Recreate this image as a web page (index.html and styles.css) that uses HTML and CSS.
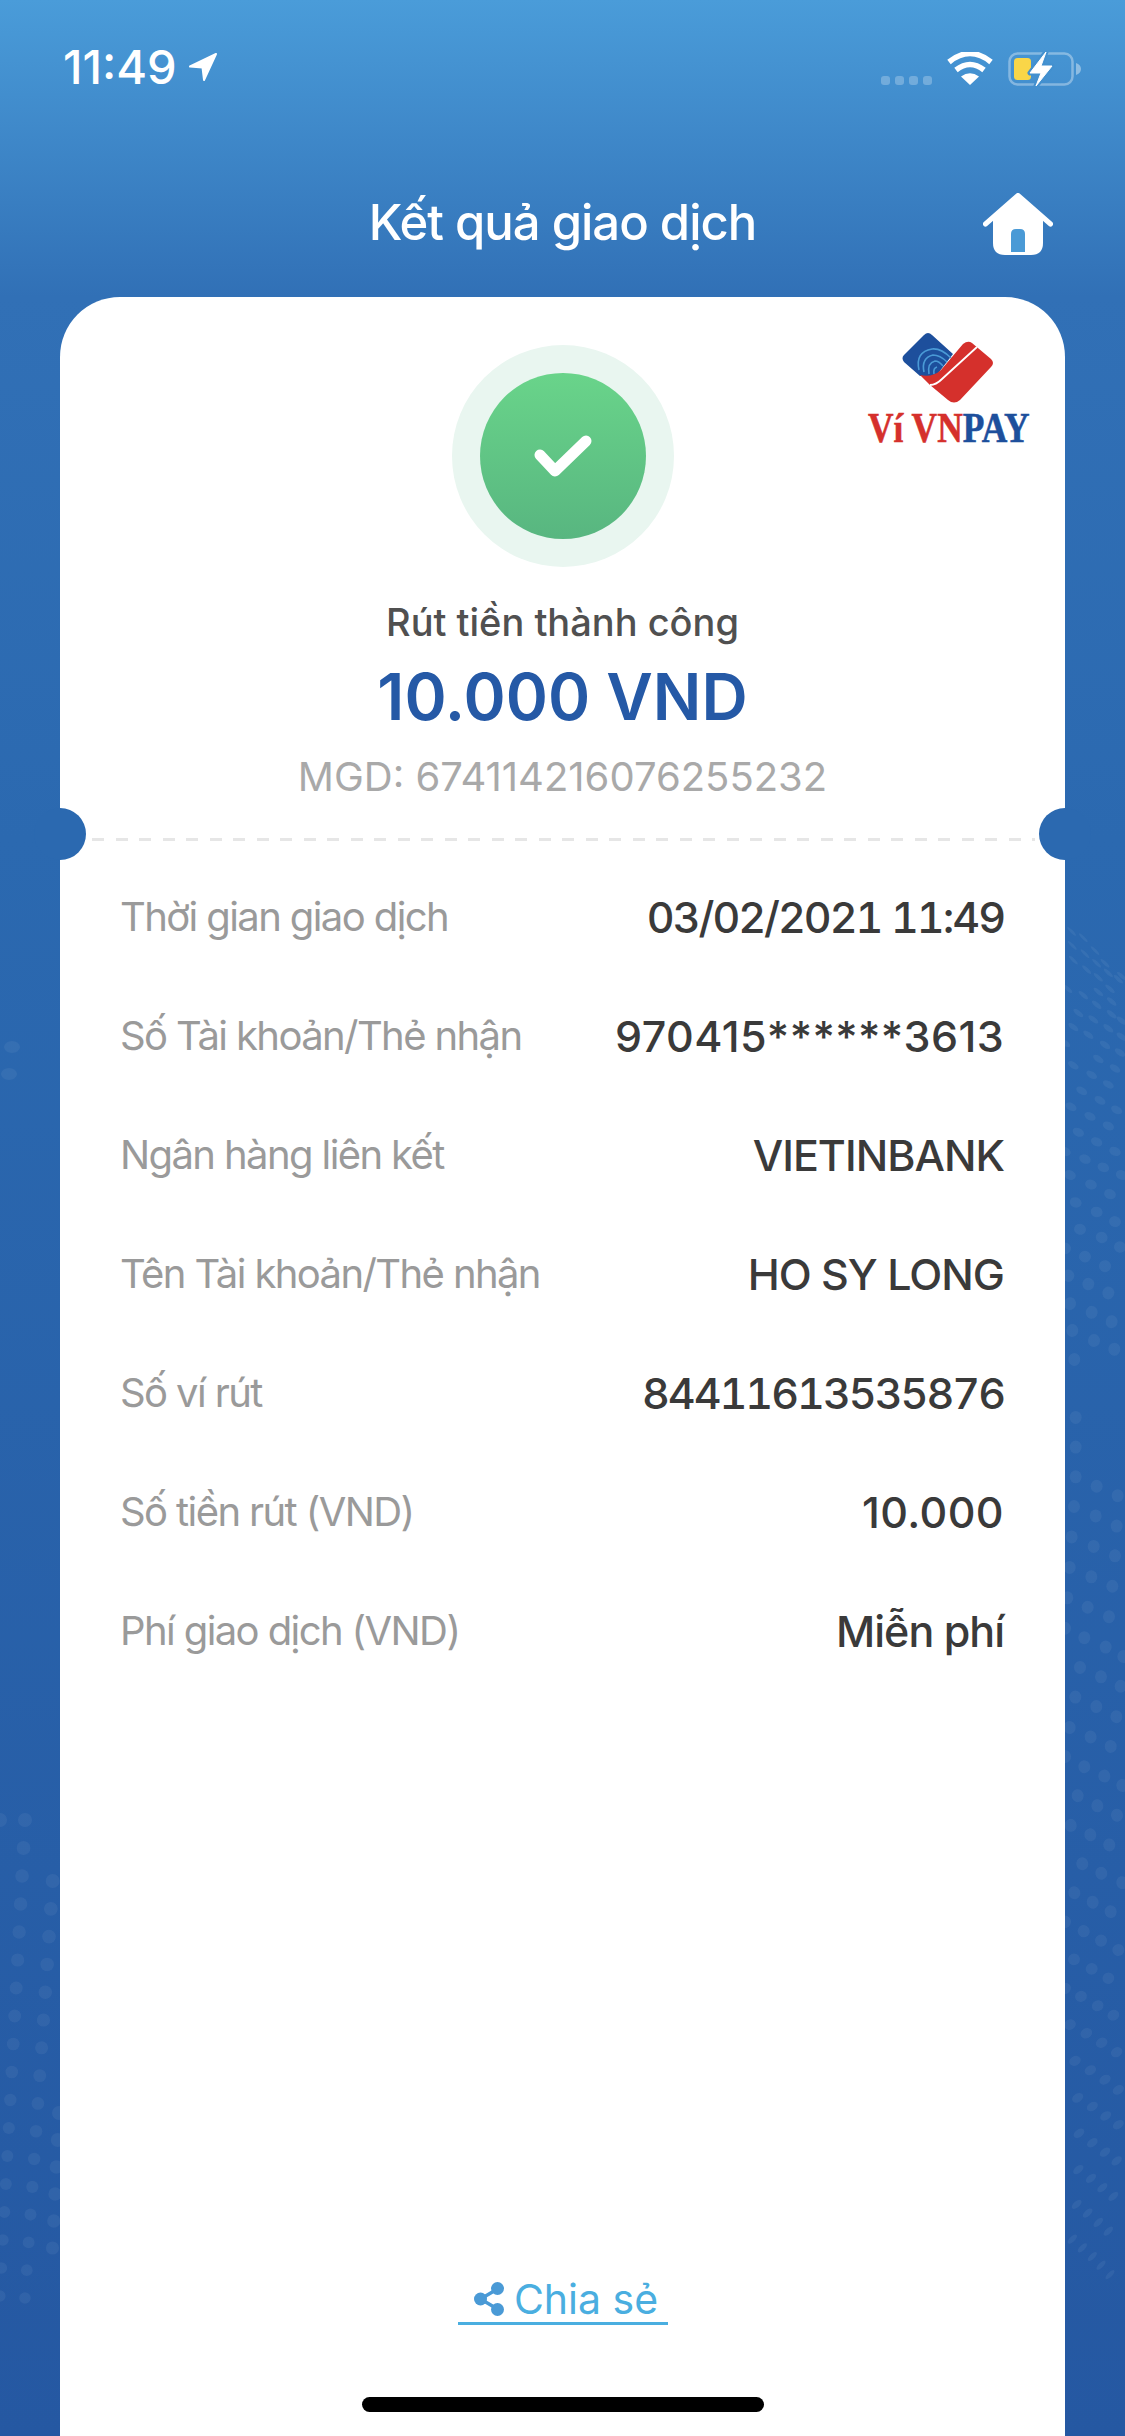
FILE: index.html
```html
<!DOCTYPE html>
<html lang="vi">
<head>
    <meta charset="UTF-8">
    <meta name="viewport" content="width=device-width, initial-scale=1.0">
    <title>Kết quả giao dịch</title>
    <link rel="stylesheet" href="styles.css">
</head>
<body>
    <div class="screen">
        <svg class="dots" width="1125" height="2436" viewBox="0 0 1125 2436">
            <g fill="#fff" fill-opacity="0.055" id="dotGroup"></g>
        </svg>

        <div class="status-bar">
            <div class="status-left">
                <span class="clock">11:49</span>
                <svg class="loc-icon" width="30" height="30" viewBox="0 0 30 30"><path d="M28 2 2 14.500l12.500 1L16 28z" fill="#fff" stroke="#fff" stroke-width="2" stroke-linejoin="round"/></svg>
            </div>
            <div class="status-right">
                <div class="signal"><i></i><i></i><i></i><i></i></div>
                <svg class="wifi-icon" width="46" height="33" viewBox="0 0 46 33">
                    <path d="M23 33 14 24.500q9-6.500 18 0z" fill="#fff"/>
                    <path d="M9 18q14-11 28 0" fill="none" stroke="#fff" stroke-width="5.500"/>
                    <path d="M2 10q21-17 42 0" fill="none" stroke="#fff" stroke-width="5.500"/>
                </svg>
                <svg class="battery-icon" width="74" height="35" viewBox="0 0 74 35">
                    <rect x="1.500" y="1.500" width="63" height="31" rx="8" fill="none" stroke="#fff" stroke-opacity="0.35" stroke-width="2.500"/>
                    <path d="M68 11c3 1 5 3 5 6s-2 5-5 6z" fill="#fff" fill-opacity="0.4"/>
                    <rect x="6" y="6" width="17" height="22" rx="3.500" fill="#f9d648"/>
                    <path d="M38 0 22 21H33L28 34 44 14H33z" fill="#4290cf" stroke="#4290cf" stroke-width="5" stroke-linejoin="round"/>
                    <path d="M38 0 22 21H33L28 34 44 14H33z" fill="#fff" stroke="#fff" stroke-width="1" stroke-linejoin="round"/>
                </svg>
            </div>
        </div>

        <header class="top-bar">
            <h1>Kết quả giao dịch</h1>
            <svg class="home-icon" width="70" height="62" viewBox="0 0 70 62">
                <path d="M2.500 31 35 2.500 67.500 31" fill="none" stroke="#fff" stroke-width="5" stroke-linecap="round" stroke-linejoin="round"/>
                <path d="M35 3 60 25v25q0 12-12 12H22Q10 62 10 50V25z" fill="#fff"/>
                <path d="M28 59V41q0-5 5-5h4q5 0 5 5v18z" fill="#4a9ad6"/>
            </svg>
        </header>

        <main class="card">
            <span class="notch notch-left"></span>
            <span class="notch notch-right"></span>

            <svg class="logo" width="172" height="128" viewBox="0 0 172 128">
                <path d="M58 5q4-4 8 0L87 24 70 46H54L38 32q-3-4 0-7z" fill="#1d4f9c"/>
                <g fill="none" stroke="#4a9ad6" stroke-width="1.600">
                    <path d="M53 40Q49 22 66 19 75 18 85 28"/>
                    <path d="M58 42Q55 28 67 25 74 25 81 32"/>
                    <path d="M63 44Q61 33 69 31 73 31 77 36"/>
                    <path d="M68 44Q67 38 71 37"/>
                </g>
                <path d="M54 45Q66 48 75 40L97 14q5-4 9-1L125 29q4 4 0 8L94 70q-6 5-12 0L64 55z" fill="#d5302c"/>
                <path d="M64 55Q70 55 76 49L111 17" fill="none" stroke="#fff" stroke-width="1.800"/>
                <g transform="translate(2 112) scale(1 1.17)">
                    <text class="logo-text"><tspan class="logo-red">Ví VN</tspan><tspan class="logo-blue">PAY</tspan></text>
                </g>
            </svg>

            <section class="result">
                <div class="check-ring">
                    <div class="check-circle">
                        <svg width="58" height="42" viewBox="0 0 58 42"><path d="M6 20 21 36 52 6" fill="none" stroke="#fff" stroke-width="11" stroke-linecap="round" stroke-linejoin="round"/></svg>
                    </div>
                </div>
                <p class="result-title">Rút tiền thành công</p>
                <p class="result-amount">10.000 VND</p>
                <p class="result-code">MGD: 674114216076255232</p>
            </section>

            <div class="divider"></div>

            <section class="details">
                <div class="row"><span class="label">Thời gian giao dịch</span><span class="value value-num">03/02/2021 11:49</span></div>
                <div class="row"><span class="label">Số Tài khoản/Thẻ nhận</span><span class="value value-wide">970415******3613</span></div>
                <div class="row"><span class="label">Ngân hàng liên kết</span><span class="value">VIETINBANK</span></div>
                <div class="row"><span class="label">Tên Tài khoản/Thẻ nhận</span><span class="value">HO SY LONG</span></div>
                <div class="row"><span class="label">Số ví rút</span><span class="value value-num">84411613535876</span></div>
                <div class="row"><span class="label">Số tiền rút (VND)</span><span class="value value-wide">10.000</span></div>
                <div class="row"><span class="label">Phí giao dịch (VND)</span><span class="value">Miễn phí</span></div>
            </section>

            <a class="share-link" href="#">
                <svg width="30" height="34" viewBox="0 0 30 34">
                    <path d="M23.500 7 6.500 17l17 10" fill="none" stroke="#4a9ad6" stroke-width="3.500"/>
                    <circle cx="23.500" cy="6.500" r="6.500" fill="#4a9ad6"/>
                    <circle cx="6.500" cy="17" r="6.500" fill="#4a9ad6"/>
                    <circle cx="23.500" cy="27.500" r="6.500" fill="#4a9ad6"/>
                </svg>
                Chia sẻ
            </a>
        </main>

        <div class="home-indicator"></div>
    </div>

    <script>
        // dotted wave on the page edges
        var group = document.getElementById('dotGroup');

        function addDot(x, y, rx, ry, angle) {
            var e = document.createElementNS('http://www.w3.org/2000/svg', 'ellipse');
            e.setAttribute('cx', x);
            e.setAttribute('cy', y);
            e.setAttribute('rx', rx);
            e.setAttribute('ry', ry);
            e.setAttribute('transform', 'rotate(' + angle + ' ' + x + ' ' + y + ')');
            group.appendChild(e);
        }

        // left edge, slanted columns
        function column(x0, slant, y0, count, step) {
            for (var i = 0; i < count; i++) {
                var r = 7 - i * 0.08;
                addDot(x0 - slant * i, y0 + step * i, r, r, 0);
            }
        }
        column(25, 1.47, 1820, 18, 28);
        column(52.700, 1.850, 1881, 16, 27.800);
        column(59, 1.300, 2113, 6, 27);
        addDot(12, 1047, 8, 6, 0);
        addDot(9, 1074, 8, 6, 0);
        addDot(0, 1820, 7, 7, 0);

        // right edge, flat and tilted at both ends of the wave
        function rightDot(x, y) {
            var angle = 0, ry = 6.500, rx = 6;
            if (y < 1400) angle = Math.min(45, 45 * (1400 - y) / 450);
            if (y > 1700) angle = -Math.min(45, 45 * (y - 1700) / 550);
            if (y < 1300) ry = Math.max(1.500, 6.500 - 5 * (1300 - y) / 350);
            if (y > 1900) ry = Math.max(1.500, 6.500 - 5 * (y - 1900) / 450);
            addDot(x, y, rx, ry, angle);
        }
        var upper = [20,990,55,1000,90,1020,120,1040,22,1012,60,1025,95,1040,130,1055,160,1065,25,1035,65,1050,100,1062,135,1080,170,1060,8,1080,55,1090,100,1085,140,1100,40,1118,95,1105,140,1120,170,1130,25,1140,85,1128,130,1142,170,1155,0,1165,70,1152,120,1168,165,1180,25,1200,100,1190,150,1205,80,1215,130,1230,50,1240,105,1255,155,1270,18,1265,75,1280,130,1295,40,1305,95,1320,150,1335,0,1335,60,1347,115,1360,170,1372,15,1372,78,1387,135,1402,32,1415,95,1430,150,1445,45,1457,110,1470,165,1485,0,1487,60,1500,120,1515,10,1530,70,1543,130,1557];
        for (var i = 0; i < upper.length; i += 2) rightDot(1065 + upper[i] / 3, 300 + upper[i + 1] / 1.568);
        var lower = [15,5,80,17,140,30,22,42,87,56,148,68,28,82,32,162,32,203,32,244,95,257,158,270,27,285,92,298,155,312,20,327,86,340,150,353,14,369,79,382,142,395,7,411,68,424,132,437,0,453,58,466,122,479,45,507,108,520,175,492,31,548,94,561,167,533,14,590,77,603,154,575,0,630,58,644,137,616,38,684,118,657,172,670,17,725,97,698,156,711,76,738,133,752,52,778,109,791,172,804,28,818,83,831,137,844,0,858,56,871,108,884,160,897,27,910,80,923,130,936,0,950,48,961,98,974,145,987,15,1000,64,1012,110,1025,155,1038,30,1050,76,1063,120,1076,160,1090,38,1101,82,1113,122,1126,160,1138,42,1150,82,1163,120,1176,155,1188,40,1200,78,1212,112,1225,145,1237,35,1248,68,1260,100,1273,130,1285,22,1296,52,1308,82,1320,108,1332,135,1345];
        for (var j = 0; j < lower.length; j += 2) rightDot(1065 + lower[j] / 3, 1300 + lower[j + 1] / 1.38);
    </script>
</body>
</html>
```

FILE: styles.css
```css
* {
    margin: 0;
    padding: 0;
    box-sizing: border-box;
}

body {
    width: 1125px;
    height: 2436px;
    overflow: hidden;
    font-family: Inter, "Noto Sans", sans-serif;
    background: #2558a2;
}

.screen {
    position: relative;
    width: 1125px;
    height: 2436px;
    display: flex;
    flex-direction: column;
    overflow: hidden;
    background: linear-gradient(to bottom, #4a9cd9 0, #3170b6 297px, #2b69b0 840px, #2558a2 2436px);
}

.dots {
    position: absolute;
    top: 0;
    left: 0;
}

.status-bar {
    position: relative;
    height: 132px;
    padding: 44px 43px 0 63px;
    display: flex;
    justify-content: space-between;
    align-items: flex-start;
    color: #fff;
}

.status-left {
    display: flex;
    align-items: center;
    gap: 11px;
}

.clock {
    font-size: 47px;
    line-height: 46px;
    font-weight: 500;
}

.status-right {
    display: flex;
    align-items: flex-start;
    gap: 15px;
    padding-top: 8px;
}

.signal {
    display: flex;
    gap: 5px;
    padding-top: 24px;
}

.signal i {
    width: 9px;
    height: 9px;
    border-radius: 3px;
    background: rgba(255, 255, 255, 0.25);
}

.top-bar {
    position: relative;
    height: 165px;
    display: flex;
    justify-content: center;
    padding-top: 57px;
}

.top-bar h1 {
    font-size: 49px;
    line-height: 68px;
    font-weight: 500;
    letter-spacing: -1px;
    color: #fff;
}

.home-icon {
    position: absolute;
    top: 61px;
    right: 72px;
}

.card {
    position: relative;
    flex: 1;
    margin: 0 60px;
    display: flex;
    flex-direction: column;
    background: #fff;
    border-radius: 60px 60px 0 0;
}

.notch {
    position: absolute;
    top: 511px;
    width: 52px;
    height: 52px;
    border-radius: 50%;
    background: #2b69b0;
}

.notch-left {
    left: -26px;
}

.notch-right {
    right: -26px;
}

.logo {
    position: absolute;
    top: 33px;
    right: 27px;
}

.logo-text {
    font-family: "Liberation Serif", serif;
    font-size: 35.400px;
    font-weight: 700;
    stroke-width: 0.5px;
}

.logo-red {
    fill: #d5302c;
    stroke: #d5302c;
}

.logo-blue {
    fill: #1d4f9c;
    stroke: #1d4f9c;
}

.result {
    display: flex;
    flex-direction: column;
    align-items: center;
    padding-top: 48px;
}

.check-ring {
    width: 222px;
    height: 222px;
    display: flex;
    align-items: center;
    justify-content: center;
    border-radius: 50%;
    background: #e9f6f0;
}

.check-circle {
    width: 166px;
    height: 166px;
    display: flex;
    align-items: center;
    justify-content: center;
    border-radius: 50%;
    background: linear-gradient(to bottom, #69d48a, #58b680);
}

.result-title {
    margin-top: 30px;
    font-size: 38px;
    line-height: 50px;
    font-weight: 500;
    color: #505050;
}

.result-amount {
    margin-top: 12px;
    font-size: 64px;
    line-height: 76px;
    font-weight: 600;
    color: #2559a6;
}

.result-code {
    margin-top: 17px;
    font-size: 40px;
    line-height: 50px;
    color: #a9a9a9;
}

.divider {
    margin: 36px 30px 0 32px;
    height: 3px;
    background: repeating-linear-gradient(to right, #e6e6e6 0, #e6e6e6 12px, transparent 12px, transparent 23.500px);
}

.details {
    display: flex;
    flex-direction: column;
    padding: 16px 61px 0 60px;
}

.row {
    height: 119px;
    display: flex;
    justify-content: space-between;
    align-items: center;
}

.label {
    font-size: 40px;
    letter-spacing: -1.600px;
    color: #9a9a9a;
}

.value {
    font-size: 43px;
    font-weight: 500;
    letter-spacing: -1px;
    color: #3a3a3a;
}

.value-num {
    font-variant-numeric: tabular-nums;
    letter-spacing: -2px;
}

.value-wide {
    letter-spacing: 0.400px;
}

.share-link {
    display: flex;
    align-items: center;
    justify-content: center;
    gap: 10px;
    align-self: center;
    width: 210px;
    height: 50px;
    margin-top: auto;
    margin-bottom: 111px;
    padding-left: 7px;
    border-bottom: 3px solid #4aaee0;
    font-size: 41px;
    color: #4aaee0;
    text-decoration: none;
}

.home-indicator {
    position: absolute;
    left: 362px;
    top: 2397px;
    width: 402px;
    height: 15px;
    border-radius: 8px;
    background: #000;
}
```
